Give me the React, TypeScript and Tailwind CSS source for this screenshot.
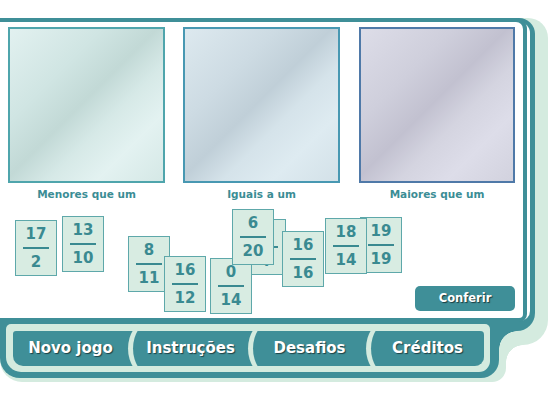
import React from "react";

const cards = [
  { n: "17", d: "2", pos: "left-[15px] top-[198px]" },
  { n: "13", d: "10", pos: "left-[62px] top-[194px]" },
  { n: "8", d: "11", pos: "left-[128px] top-[214px]" },
  { n: "16", d: "12", pos: "left-[164px] top-[234px]" },
  { n: "", d: "4", pos: "left-[244px] top-[197px]" },
  { n: "0", d: "14", pos: "left-[210px] top-[236px]" },
  { n: "6", d: "20", pos: "left-[232px] top-[187px]" },
  { n: "16", d: "16", pos: "left-[282px] top-[209px]" },
  { n: "19", d: "19", pos: "left-[360px] top-[195px]" },
  { n: "18", d: "14", pos: "left-[325px] top-[196px]" },
];

function Card({ n, d, pos }: { n: string; d: string; pos: string }) {
  return (
    <div
      className={`absolute ${pos} w-[42px] h-[56px] bg-[#d8ece2] border border-[#5ea8aa] flex flex-col items-center pt-[8px] text-[#3a8a91] font-bold text-[15px] leading-[10px]`}
    >
      <span className="h-[10px]">{n}</span>
      <span className="mt-[8px] w-[26px] h-[2px] bg-[#3a8a91]" />
      <span className="mt-[8px] h-[10px]">{d}</span>
    </div>
  );
}

function SepButton({ w, label }: { w: string; label: string }) {
  return (
    <div className={`${w} shrink-0 h-[55px] -my-[10px] bg-[#d4ebdf] rounded-l-[20px_50%] pl-[5px] flex`}>
      <div className="flex-1 bg-[#3f8f98] rounded-l-[20px_50%] flex items-center justify-center text-white font-bold text-[15px] [text-shadow:1px_1px_1px_rgba(0,0,0,0.55)]">
        {label}
      </div>
    </div>
  );
}

export default function App() {
  return (
    <div className="w-[550px] h-[400px] bg-white overflow-hidden grid font-['DejaVu_Sans',Verdana,sans-serif]">
      {/* outer light green frame */}
      <div className="col-start-1 row-start-1 flex flex-col">
        <div className="mt-[18px] w-[548px] h-[327px] bg-[#d4ebdf] rounded-tr-[20px] rounded-br-[25px]" />
        <div className="-mt-[27px] flex">
          <div className="w-[506px] h-[64px] bg-[#d4ebdf] rounded-bl-[22px] rounded-br-[14px]" />
          <div className="mt-[27px] w-[17px] h-[17px] bg-[radial-gradient(circle_at_100%_100%,transparent_16.5px,#d4ebdf_17px)]" />
        </div>
      </div>

      {/* teal frame */}
      <div className="col-start-1 row-start-1 flex flex-col">
        <div className="mt-[18px] w-[535px] h-[313px] bg-[#3f8f98] rounded-tr-[16px] rounded-br-[18px]" />
        <div className="-mt-[13px] flex">
          <div className="w-[499px] h-[60px] bg-[#3f8f98] rounded-bl-[20px] rounded-br-[18px]" />
          <div className="mt-[13px] w-[18px] h-[18px] bg-[radial-gradient(circle_at_100%_100%,transparent_17.5px,#3f8f98_18px)]" />
        </div>
      </div>

      {/* white gap */}
      <div className="col-start-1 row-start-1 flex flex-col">
        <div className="mt-[22px] w-[530px] h-[299px] bg-white rounded-tr-[11px] rounded-br-[10px]" />
      </div>

      {/* main panel + bottom bar */}
      <div className="col-start-1 row-start-1 flex flex-col">
        <div className="relative mt-[18px] w-[527px] h-[304px] bg-white border-y-4 border-r-4 border-[#3f8f98] rounded-tr-[11px] rounded-br-[8px] flex flex-col">
          <div className="flex pl-[8px] pt-[5px] gap-[18px]">
            <div className="w-[157px] h-[156px] border-2 border-[#4fa5ac] bg-[linear-gradient(135deg,#e2f1f0_0%,#d0e5e3_30%,#c2d9d6_48%,#d6e9e7_62%,#e3f2f1_78%,#d5e8e6_100%)]" />
            <div className="w-[157px] h-[156px] border-2 border-[#4898b2] bg-[linear-gradient(135deg,#dde9ef_0%,#cddbe3_30%,#c0cfd8_48%,#d5e3ea_62%,#deebf1_78%,#d3e1e8_100%)]" />
            <div className="ml-[1px] w-[156px] h-[156px] border-2 border-[#4f79a8] bg-[linear-gradient(135deg,#dddde8_0%,#cfcfdc_30%,#c2c1d0_48%,#d4d4e0_62%,#dddde9_78%,#d2d2de_100%)]" />
          </div>
          <div className="flex pl-[8px] gap-[18px] mt-[5px] text-[#3b8d95] font-bold text-[10.5px] leading-[13px]">
            <div className="w-[157px] text-center">Menores que um</div>
            <div className="w-[157px] text-center">Iguais a um</div>
            <div className="ml-[1px] w-[156px] text-center">Maiores que um</div>
          </div>
          <div className="flex-1 flex justify-end items-end pr-[8px] pb-[7px]">
            <div className="w-[100px] h-[25px] rounded-[5px] bg-[#3f8f98] flex items-center justify-center text-white font-bold text-[11.5px] [text-shadow:1px_1px_1px_rgba(0,0,0,0.6)]">
              Conferir
            </div>
          </div>
          {cards.map((c, i) => (
            <Card key={i} n={c.n} d={c.d} pos={c.pos} />
          ))}
        </div>

        <div className="mt-[2px] ml-[6px] w-[484px] h-[48px] bg-[#d4ebdf] rounded-[5px_5px_11px_15px] pt-[7px] pl-[7px] pr-[6px]">
          <div className="flex h-[35px] overflow-hidden bg-[#3f8f98] rounded-[3px_4px_9px_10px]">
            <div className="w-[115px] shrink-0 flex items-center justify-center text-white font-bold text-[15px] [text-shadow:1px_1px_1px_rgba(0,0,0,0.55)]">
              Novo jogo
            </div>
            <SepButton w="w-[120px]" label="Instruções" />
            <SepButton w="w-[118px]" label="Desafios" />
            <SepButton w="flex-1" label="Créditos" />
          </div>
        </div>
      </div>
    </div>
  );
}
